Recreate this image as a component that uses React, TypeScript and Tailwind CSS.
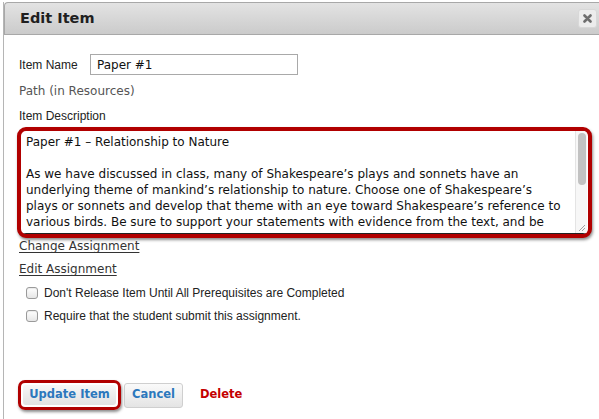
import React from 'react';

const verdana = { fontFamily: '"DejaVu Sans", Verdana, sans-serif' };
const helv = { fontFamily: '"Liberation Sans", Arial, sans-serif' };

const descLines = [
  'Paper #1 – Relationship to Nature',
  '',
  'As we have discussed in class, many of Shakespeare’s plays and sonnets have an',
  'underlying theme of mankind’s relationship to nature. Choose one of Shakespeare’s',
  'plays or sonnets and develop that theme with an eye toward Shakespeare’s reference to',
  'various birds. Be sure to support your statements with evidence from the text, and be',
];

const Checkbox = () => (
  <span className="inline-block w-[12px] h-[12px] rounded-[3px] border border-[#9a9a9a] bg-gradient-to-b from-white to-[#e6e6e6] shadow-[inset_0_1px_1px_rgba(0,0,0,0.08)]" />
);

export default function App() {
  return (
    <div className="w-[599px] h-[419px] bg-white overflow-hidden relative pl-[3px] pt-[2px]">
      <div className="h-full border-l border-[#b5b5b5]">
        <div className="h-[33px] flex items-center justify-between pl-[15px] pr-[2px] rounded-tl-[4px] border border-r-0 border-[#a8a8a8] bg-gradient-to-b from-[#e3e3e3] to-[#cbcbcb]">
          <span className="text-[14.5px] font-bold text-[#1f1f1f]" style={verdana}>Edit Item</span>
          <span className="w-[19px] h-[19px] flex items-center justify-center rounded-[3px] bg-[#ececec] border border-[#d8d8d8]">
            <svg width="9" height="9" viewBox="0 0 9 9">
              <path d="M1.5 1.5 L7.5 7.5 M7.5 1.5 L1.5 7.5" stroke="#6e6e6e" strokeWidth="2.6" strokeLinecap="round" />
            </svg>
          </span>
        </div>

        <div className="pl-[15px] pt-[19px]">
          <div className="flex items-center h-[21px]">
            <span className="text-[12px] text-[#222] w-[71px]" style={helv}>Item Name</span>
            <div className="w-[208px] h-[21px] border border-[#a9a9a9] flex items-center px-[6px] text-[12px] text-[#111]" style={verdana}>Paper #1</div>
          </div>
          <div className="mt-[7px] text-[12px] text-[#555]" style={verdana}>Path (in Resources)</div>
          <div className="mt-[7px] text-[12px] text-[#222]" style={helv}>Item Description</div>
        </div>

        <div className="ml-[13px] mt-[2px] w-[575px] h-[111px] border-[4px] border-[#b10000] rounded-[9px] shadow-[1px_2px_3px_rgba(0,0,0,0.45)] bg-white overflow-hidden">
          <div className="h-full flex border-b border-[#222]">
            <div className="flex-1 pl-[5px] pt-[3px] text-[12px] leading-[16px] text-[#111] whitespace-pre" style={verdana}>
              {descLines.map((l, i) => (
                <div key={i} className="h-[16px]">{l}</div>
              ))}
            </div>
            <div className="w-[12px] mr-[1px] border-l border-[#e4e4e4] bg-[#f7f7f7] relative">
              <div className="mx-auto mt-[2px] w-[8px] h-[52px] rounded-full bg-[#c2c2c2]" />
              <svg className="absolute right-[1px] bottom-[1px]" width="9" height="9" viewBox="0 0 9 9">
                <path d="M8 2 L2 8 M8 5 L5 8" stroke="#a0a0a0" strokeWidth="1" />
              </svg>
            </div>
          </div>
        </div>

        <div className="pl-[15px] text-[12px] text-[#333]" style={verdana}>
          <div className="h-[16px] flex items-center"><span className="underline underline-offset-2">Change Assignment</span></div>
          <div className="h-[30px] flex items-center"><span className="underline underline-offset-2">Edit Assignment</span></div>
        </div>

        <div className="pl-[22px] text-[12px] text-[#222]" style={helv}>
          <div className="flex items-center gap-[6px] h-[18px]">
            <Checkbox />
            <span>Don't Release Item Until All Prerequisites are Completed</span>
          </div>
          <div className="flex items-center gap-[6px] h-[28px]">
            <Checkbox />
            <span>Require that the student submit this assignment.</span>
          </div>
        </div>

        <div className="pl-[14px] mt-[50px] flex items-center">
          <div className="h-[30px] w-[103px] p-[2px] border-[3px] border-[#b10000] rounded-[7px] shadow-[1px_2px_3px_rgba(0,0,0,0.45)]">
            <div className="h-full flex items-center justify-center rounded-[3px] bg-gradient-to-b from-[#f7f7f7] to-[#e2e2e2] text-[11.5px] font-bold text-[#2b78bd]" style={verdana}>Update Item</div>
          </div>
          <div className="ml-[3px] h-[25px] w-[59px] flex items-center justify-center rounded-[3px] border border-[#cfcfcf] bg-gradient-to-b from-[#fafafa] to-[#e4e4e4] text-[11.5px] font-bold text-[#2b78bd]" style={verdana}>Cancel</div>
          <div className="ml-[17px] text-[11.5px] font-bold text-[#c40000]" style={verdana}>Delete</div>
        </div>
      </div>
    </div>
  );
}
